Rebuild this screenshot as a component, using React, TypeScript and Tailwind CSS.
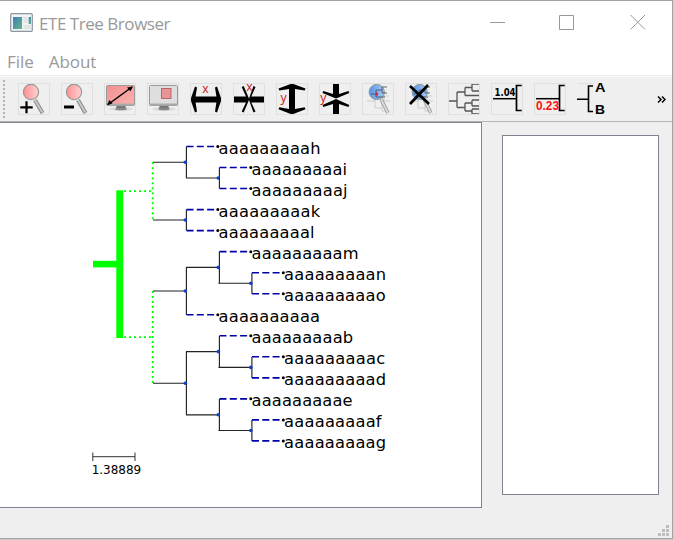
import type { ReactNode } from "react";

type Leaf = { name: string; x: number; width: number };

const leaves: Leaf[] = [
  { name: "aaaaaaaaah", x: 186, width: 102 },
  { name: "aaaaaaaaai", x: 219, width: 95.5 },
  { name: "aaaaaaaaaj", x: 219, width: 96 },
  { name: "aaaaaaaaak", x: 186, width: 101.5 },
  { name: "aaaaaaaaal", x: 186, width: 96 },
  { name: "aaaaaaaaam", x: 219, width: 107 },
  { name: "aaaaaaaaan", x: 251.5, width: 102 },
  { name: "aaaaaaaaao", x: 251.5, width: 101.5 },
  { name: "aaaaaaaaaa", x: 186, width: 101.5 },
  { name: "aaaaaaaaab", x: 219, width: 101.5 },
  { name: "aaaaaaaaac", x: 251.5, width: 101 },
  { name: "aaaaaaaaad", x: 251.5, width: 102 },
  { name: "aaaaaaaaae", x: 219, width: 101 },
  { name: "aaaaaaaaaf", x: 251.5, width: 97.5 },
  { name: "aaaaaaaaag", x: 251.5, width: 102 },
];

// x, y of the node, then the top and bottom of its vertical bar
const nodes = [
  [186, 162.2, 146.4, 178],
  [219, 178, 167.4, 188.5],
  [186, 220, 209.5, 230.6],
  [186, 291, 267.4, 314.8],
  [219, 267.4, 251.6, 283.2],
  [251.5, 283.2, 272.7, 293.7],
  [186, 383.2, 351.6, 414.8],
  [219, 351.6, 335.9, 367.4],
  [251.5, 367.4, 356.9, 378],
  [219, 414.8, 399, 430.5],
  [251.5, 430.5, 420.1, 441.1],
];

function TreeView() {
  return (
    <svg width="481" height="384" viewBox="0 123 481 384" className="block">
      <g fill="#00ff00">
        <rect x="116.3" y="190.3" width="6.9" height="147.7" />
        <rect x="93" y="260.8" width="30" height="6.6" />
      </g>
      <g stroke="#00ff00" strokeWidth="1.8" strokeDasharray="2 3" fill="none">
        <path d="M124 191.2H153M152.7 162.3V220M124 337.2H153M152.7 291V383.5" />
      </g>
      {nodes.map(([x, y, top, bottom]) => (
        <g key={`${x}-${y}`}>
          <path
            d={`M${x - 33} ${y}H${x}M${x + 0.4} ${top}V${bottom}`}
            stroke="#222"
            strokeWidth="1.15"
            fill="none"
          />
          <circle cx={x - 0.7} cy={y} r="1.8" fill="#1040c8" />
        </g>
      ))}
      {leaves.map(({ name, x, width }, i) => {
        const y = 146.5 + i * 21.03;
        return (
          <g key={name}>
            <path d={`M${x + 0.5} ${y}h28`} stroke="#0000a8" strokeWidth="1.6" strokeDasharray="7 3.3" />
            <circle cx={x + 31.8} cy={y} r="1.5" fill="#000" />
            <text
              x={x + 32.6}
              y={Math.floor(y + 7.6)}
              textLength={width}
              lengthAdjust="spacing"
              className="fill-black font-['DejaVu_Sans',sans-serif] text-[16.3px]"
            >
              {name}
            </text>
          </g>
        );
      })}
      <path d="M92.8 456.7H135M92.8 452.5V461M135 452.5V461" stroke="#333" fill="none" />
      <text x="91.7" y="474" textLength="49.5" className="fill-black font-['DejaVu_Sans',sans-serif] text-[12px]">
        1.38889
      </text>
    </svg>
  );
}

function Tool({ children, plain = false }: { children: ReactNode; plain?: boolean }) {
  return (
    <div className={`h-8 w-8 shrink-0 ${plain ? "" : "outline-1 -outline-offset-1 outline-[#e0e0e0]"}`}>
      <svg width="32" height="32" viewBox="0 0 32 32" className="overflow-visible">
        {children}
      </svg>
    </div>
  );
}

function Magnifier() {
  return (
    <>
      <path d="M17 17L24.5 30" stroke="#888" strokeWidth="4" />
      <path d="M17 17L24.3 29.5" stroke="#c9c9c9" strokeWidth="2" />
      <circle cx="13" cy="9" r="7.6" fill="url(#lens)" stroke="#999" strokeWidth="1.2" />
    </>
  );
}

function Monitor({ fill }: { fill: string }) {
  return (
    <>
      <ellipse cx="17" cy="26" rx="12" ry="2" fill="#ddd" />
      <path d="M13 22h8l1 3h-10z" fill="#777" />
      <ellipse cx="17" cy="26" rx="6" ry="1.3" fill="#888" />
      <rect x="2.5" y="2.5" width="28" height="20" rx="1" fill={fill} stroke="#999" />
      <path d="M3 21.5H30" stroke="#aaa" strokeWidth="2" />
    </>
  );
}

function TreeLens() {
  return (
    <>
      <path d="M5 18H13M13 13V25M13 13H27M13 25H20M22 9V18H28M20 21V28H25" stroke="#ccc" fill="none" />
      <path d="M19 16L26 30" stroke="#999" strokeWidth="3.5" />
      <path d="M19 16L26 30" stroke="#ddd" strokeWidth="1.7" />
      <circle cx="14.7" cy="9" r="7.6" fill="url(#blueLens)" stroke="#899" />
      <path d="M9 11H14M14 7V14M14 7H20V4H25M14 14H23M20 7V10H25" stroke="#456" strokeWidth=".9" fill="none" />
      <path d="M14.8 9.5V12.5" stroke="#e02020" strokeWidth="2" />
    </>
  );
}

const bracket = "M30.7 2.5H25.5V27.5H30.7";
const arrowLabel = "fill-[#cc2222] font-['Noto_Sans',sans-serif] text-[12px]";

function Toolbar() {
  return (
    <div className="relative flex h-[45px] items-start gap-[11px] border-t border-[#fafafa] bg-[#efefef] pt-[6px] pl-[18px]">
      <div className="absolute top-[3px] left-[3px] h-[38px] w-[2px] bg-[repeating-linear-gradient(#b5b5b5_0_2px,#efefef_2px_4px)]" />
      <Tool>
        <defs>
          <linearGradient id="lens" x1="0" x2="1">
            <stop stopColor="#ff9090" />
            <stop offset="1" stopColor="#ffd3d3" />
          </linearGradient>
          <linearGradient id="blueLens" x1="0" x2="1">
            <stop stopColor="#5594e8" />
            <stop offset="1" stopColor="#a9c9f4" />
          </linearGradient>
          <linearGradient id="pinkScreen" x1="0" x2="1" y1="0" y2="1">
            <stop stopColor="#ef9191" />
            <stop offset="1" stopColor="#ffb0b0" />
          </linearGradient>
        </defs>
        <Magnifier />
        <path d="M2.3 24.3H14.7M8.5 18.3V30.3" stroke="#000" strokeWidth="2.2" />
      </Tool>
      <Tool>
        <Magnifier />
        <path d="M3 24H13" stroke="#000" strokeWidth="3" />
      </Tool>
      <Tool>
        <Monitor fill="url(#pinkScreen)" />
        <path d="M4 21.5L28 4" stroke="#000" strokeWidth="1.5" />
        <path d="M3 22l2.5-5 3 3.6zM29 3.4l-6 1.2 3.4 3.6z" />
      </Tool>
      <Tool>
        <Monitor fill="#dedede" />
        <rect x="14.5" y="5.5" width="9.5" height="10" fill="#e89595" stroke="#b66" />
      </Tool>
      <Tool>
        <path d="M.5 16.5L5 3.5l2 1-1.4 9h20.8L25 4.5l2-1 4.5 13-4.5 13-2-1 1.4-9H5.6l1.4 9-2 1z" />
        <text x="12.2" y="9.8" className={arrowLabel}>x</text>
      </Tool>
      <Tool>
        <path d="M1 13.5h12L8.7 4l2-1L16 15.5 20.5 3l2 1-4.2 9.5H31v6H18.3l4.2 9-2 1L16 17l-5.3 12.5-2-1 4.3-9H1z" />
        <text x="13.2" y="8" className={arrowLabel}>x</text>
      </Tool>
      <Tool>
        <path d="M16 .5L29.5 5.5l-.8 2L19 6v20l9.7-1.8.8 2L16 31.5 2.5 26.2l.8-2L13 26V6L3.3 7.5l-.8-2z" />
        <text x="4.5" y="18.5" className={arrowLabel}>y</text>
      </Tool>
      <Tool>
        <path d="M14 1h6v10l9.5-3 .8 2L17 15.5 3.5 10l.8-2L14 11zM17 16L30.3 22l-.8 2L20 21v10h-6V21l-9.7 3-.8-2z" />
        <text x="1.2" y="18.5" className={arrowLabel}>y</text>
      </Tool>
      <Tool><TreeLens /></Tool>
      <Tool>
        <TreeLens />
        <path d="M5 3L24 21M23 2L5 21" stroke="#000" strokeWidth="2.7" />
      </Tool>
      <Tool>
        <path
          d="M1 18H9M9 9V24.5M9 9H17M17 4.5V12.5M17 4.5H24M24 1V8M24 1H31M24 8H31M17 12.5H31M9 24.5H17M17 20V28M17 20H24M24 17V23M24 17H31M24 23H31M17 28H24M24 26V31H31M24 26H31"
          stroke="#555"
          strokeWidth="1.3"
          fill="none"
        />
      </Tool>
      <Tool>
        <path d="M2 15.7H25.5" stroke="#000" strokeWidth="1.5" />
        <path d={bracket} stroke="#000" strokeWidth="1.7" fill="none" />
        <text x="3.5" y="13.3" textLength="21" lengthAdjust="spacingAndGlyphs" className="font-['DejaVu_Sans',sans-serif] text-[10px] font-bold">1.04</text>
      </Tool>
      <Tool>
        <path d="M2 15.7H25.5" stroke="#000" strokeWidth="1.5" />
        <path d={bracket} stroke="#000" strokeWidth="1.7" fill="none" />
        <text x="2" y="26.7" textLength="23" lengthAdjust="spacingAndGlyphs" className="fill-[#ff1010] font-['Liberation_Sans',sans-serif] text-[12px] font-bold">0.23</text>
      </Tool>
      <Tool plain>
        <path d="M1 .5H17" stroke="#e0e0e0" />
        <path d="M0 16.3H11M16 3H11.5V28.5H16" stroke="#000" strokeWidth="1.6" fill="none" />
        <text x="18" y="9" textLength="10.5" lengthAdjust="spacingAndGlyphs" className="font-['Liberation_Sans',sans-serif] text-[12.5px] font-bold">A</text>
        <text x="18" y="31" textLength="10" lengthAdjust="spacingAndGlyphs" className="font-['Liberation_Sans',sans-serif] text-[12.5px] font-bold">B</text>
      </Tool>
      <svg className="mt-3 ml-auto mr-[6px]" width="9" height="9" viewBox="0 0 9 9" fill="none" stroke="#000" strokeWidth="1.5">
        <path d="M1 1.5L4 4.5L1 7.5M5 1.5L8 4.5L5 7.5" />
      </svg>
    </div>
  );
}

export default function App() {
  return (
    <div className="flex h-[540px] w-[673px] flex-col bg-[#c9c9c9]">
      <div className="flex h-[539px] w-[673px] flex-col border-t border-r border-b border-[#a3a3a3] bg-[#efefef]">
        <header className="flex h-[46px] shrink-0 items-center bg-white pl-[10px]">
          <svg width="23" height="19" viewBox="0 0 23 19" className="mb-[4px]">
            <defs>
              <linearGradient id="appIcon" x1="0" y1="0" x2="1" y2="1">
                <stop stopColor="#3f7ebd" />
                <stop offset="1" stopColor="#66b584" />
              </linearGradient>
            </defs>
            <rect x=".7" y=".7" width="21.6" height="17.6" rx="1" fill="#f1f4f7" stroke="#8c969e" strokeWidth="1.2" />
            <rect x="3" y="4" width="9" height="12" fill="url(#appIcon)" />
            <path d="M13.5 4h4v6h-4zM13.5 12h7v4h-7z" fill="#e2e4e5" />
            <rect x="18.7" y="4" width="2.3" height="7" fill="url(#appIcon)" />
          </svg>
          <h1 className="ml-[6px] font-['Open_Sans',sans-serif] text-[17px] font-normal tracking-[-0.46px] text-[#999999]">
            ETE Tree Browser
          </h1>
          <svg width="156" height="16" viewBox="0 0 156 16" className="mr-[26px] mb-[3px] ml-auto" fill="none" stroke="#999">
            <path d="M0 7.5H15M69.5 .5H83.5V14.5H69.5ZM140.5 0L155 14.5M155 0L140.5 14.5" />
          </svg>
        </header>
        <nav className="flex h-[29px] shrink-0 items-center gap-[15px] border-b border-[#eeeeee] bg-white pt-px pl-[7px] font-['Open_Sans',sans-serif] text-[17px] tracking-[-0.05px] text-[#999999]">
          <span>File</span>
          <span>About</span>
        </nav>
        <Toolbar />
        <main className="flex flex-1 items-start border-t border-[#b5b5b5]">
          <div className="h-[386px] w-[482px] shrink-0 border-t border-r border-b border-[#82828f] bg-white">
            <TreeView />
          </div>
          <aside className="mt-[13px] ml-[20px] h-[360px] w-[157px] border border-[#82828f] bg-white" />
        </main>
        <footer className="flex h-[16px] shrink-0 items-end justify-end pr-[3px] pb-[2px]">
          <svg width="11" height="11" viewBox="0 0 11 11" fill="#bebebe">
            <path d="M8 0h3v3h-3zM4 4h3v3h-3zM8 4h3v3h-3zM0 8h3v3h-3zM4 8h3v3h-3zM8 8h3v3h-3z" />
          </svg>
        </footer>
      </div>
    </div>
  );
}
